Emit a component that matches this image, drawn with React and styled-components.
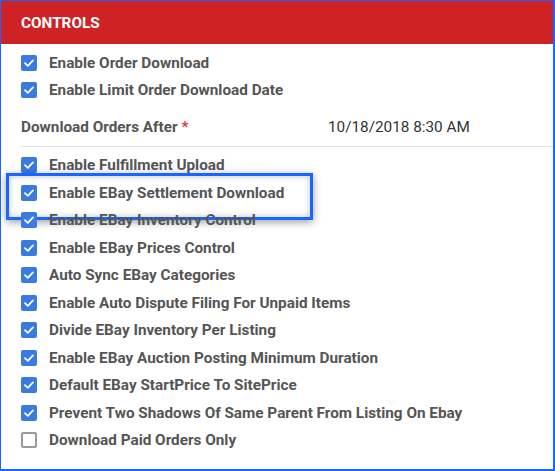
import React from "react";
import styled, { createGlobalStyle } from "styled-components";

const GlobalStyle = createGlobalStyle`
    html, body {
        margin: 0;
        padding: 0;
        background: #fff;
    }
    * {
        box-sizing: border-box;
    }
`;

const items = [
    { label: "Enable Fulfillment Upload", checked: true },
    { label: "Enable EBay Settlement Download", checked: true, highlight: true },
    { label: "Enable EBay Inventory Control", checked: true },
    { label: "Enable EBay Prices Control", checked: true },
    { label: "Auto Sync EBay Categories", checked: true },
    { label: "Enable Auto Dispute Filing For Unpaid Items", checked: true },
    { label: "Divide EBay Inventory Per Listing", checked: true },
    { label: "Enable EBay Auction Posting Minimum Duration", checked: true },
    { label: "Default EBay StartPrice To SitePrice", checked: true },
    { label: "Prevent Two Shadows Of Same Parent From Listing On Ebay", checked: true },
    { label: "Download Paid Orders Only", checked: false },
];

function Check({ checked }) {
    return (
        <Box checked={checked}>
            {checked && (
                <svg width="16" height="16" viewBox="0 0 16 16">
                    <polyline
                        points="4,8.2 6.8,10.8 12,5.4"
                        fill="none"
                        stroke="#fff"
                        strokeWidth="1.8"
                        strokeLinecap="round"
                        strokeLinejoin="round"
                    />
                </svg>
            )}
        </Box>
    );
}

function CheckItem({ label, checked, highlight }) {
    return (
        <Row highlight={highlight}>
            <Check checked={checked} />
            <Label>{label}</Label>
        </Row>
    );
}

function App() {
    return (
        <>
            <GlobalStyle />
            <Frame>
                <Header>CONTROLS</Header>
                <Body>
                    <CheckItem label="Enable Order Download" checked />
                    <CheckItem label="Enable Limit Order Download Date" checked />
                    <Field>
                        <FieldLabel>
                            Download Orders After <Required>*</Required>
                        </FieldLabel>
                        <FieldValue>10/18/2018 8:30 AM</FieldValue>
                    </Field>
                    {items.map((item) => (
                        <CheckItem key={item.label} {...item} />
                    ))}
                </Body>
            </Frame>
        </>
    );
}

export default App;

const Frame = styled.div`
    width: 555px;
    height: 471px;
    border-style: solid;
    border-color: #1766ff;
    border-width: 1px 2px 2px 1px;
    background: #fff;
    font-family: Roboto, "Liberation Sans", sans-serif;
    font-size: 15.3px;
    overflow: hidden;
`;

const Header = styled.div`
    height: 43px;
    background: #cf2224;
    color: #fff;
    font-weight: 700;
    display: flex;
    align-items: center;
    padding-left: 20px;
    padding-top: 1px;
`;

const Body = styled.div`
    padding: 5px 0 0 20px;
    display: flex;
    flex-direction: column;
`;

const Row = styled.div`
    position: relative;
    height: 27.5px;
    display: flex;
    align-items: center;
    gap: 12px;

    ${({ highlight }) =>
        highlight &&
        `
        &::after {
            content: "";
            position: absolute;
            left: -15px;
            top: -6px;
            width: 301px;
            height: 41px;
            border: 3px solid #1766ff;
            box-shadow: 0 2px 8px rgba(0, 0, 0, 0.4), inset 0 0 6px rgba(0, 0, 0, 0.25);
        }
    `}
`;

const Box = styled.span`
    width: 16px;
    height: 16px;
    flex: none;
    border-radius: 2px;
    display: flex;
    background: ${({ checked }) => (checked ? "#3a7be2" : "#fff")};
    border: ${({ checked }) => (checked ? "none" : "2px solid #9a9a9a")};
`;

const Label = styled.span`
    font-weight: 700;
    color: #555;
    white-space: nowrap;
`;

const Field = styled.div`
    display: flex;
    align-items: center;
    height: 43px;
    padding: 9px 0 5px;
    margin-bottom: 4.5px;
    border-bottom: 1px solid #e2e2e2;
`;

const FieldLabel = styled.span`
    width: 307px;
    font-weight: 700;
    color: #555;
`;

const Required = styled.span`
    color: #e53935;
`;

const FieldValue = styled.span`
    color: #333;
`;
